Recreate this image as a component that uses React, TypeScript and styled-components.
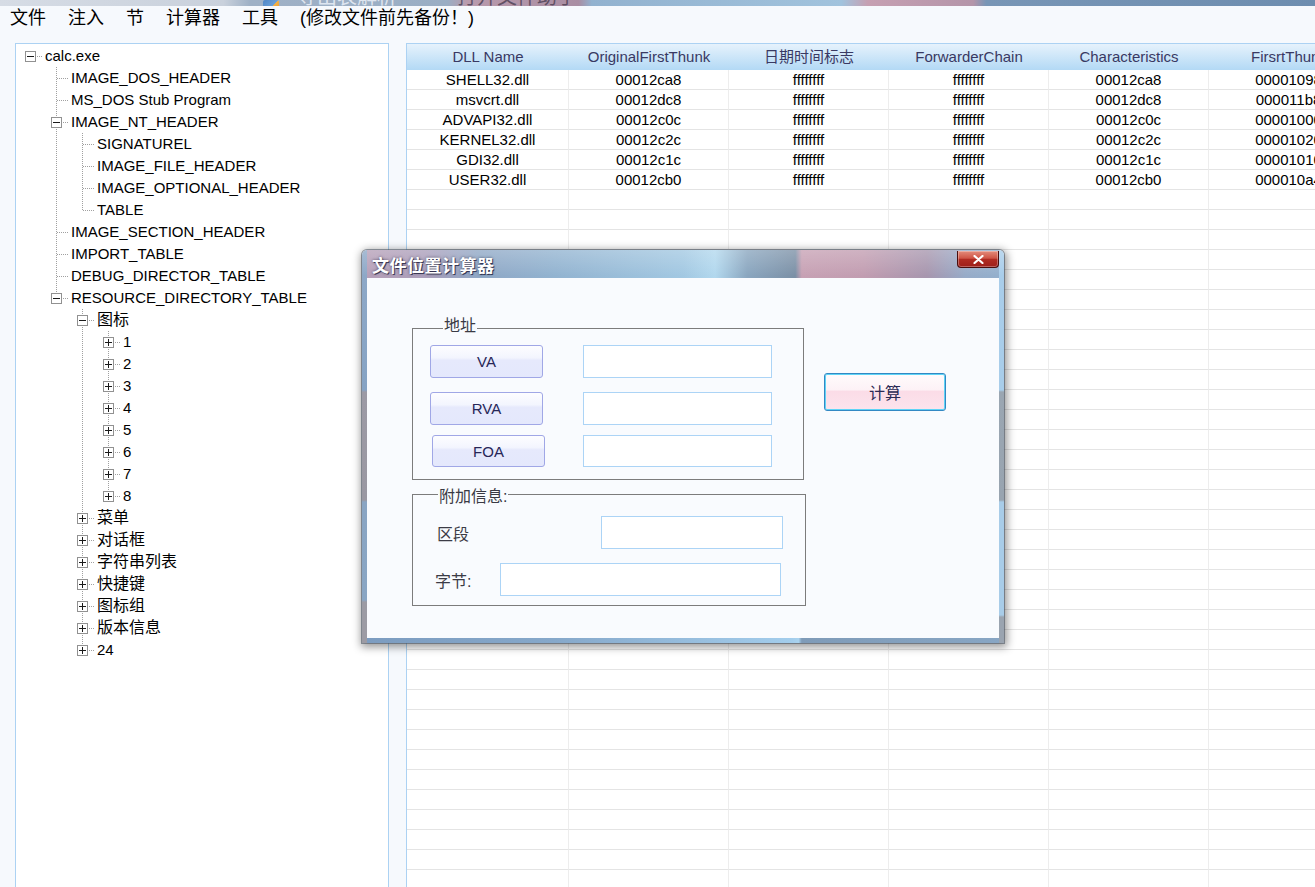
import React from "react";
import styled, { createGlobalStyle } from "styled-components";

const GlobalStyle = createGlobalStyle`
  html, body { margin: 0; padding: 0; }
  body {
    background: #f6f9fd;
    font-family: "Liberation Sans", "Noto Sans CJK SC", sans-serif;
    overflow: hidden;
  }
  * { box-sizing: border-box; }
`;

const Screen = styled.div`
  position: relative;
  width: 1315px;
  height: 887px;
  overflow: hidden;
  display: flex;
  flex-direction: column;
  background: #f6f9fd;
`;

/* ---------- window behind (cut off title bar strip) ---------- */
const BackdropStrip = styled.div`
  flex: 0 0 6px;
  height: 6px;
  overflow: hidden;
  display: flex;
  align-items: flex-end;
  background: linear-gradient(
    90deg,
    #d6dce5 0%,
    #c9d1dc 17%,
    #9fb1c6 19%,
    #9aaec4 34%,
    #b99bad 35.5%,
    #a98ea3 44%,
    #92b2cf 45%,
    #a1c3dd 64%,
    #c6a0b2 66%,
    #b495a9 74%,
    #7896b6 75%,
    #6d8daf 100%
  );
`;

const BackdropIcon = styled.span`
  flex: 0 0 auto;
  width: 16px;
  height: 14px;
  margin-left: 263px;
  margin-bottom: -8px;
  border-radius: 2px;
  background: linear-gradient(135deg, #4f86c6 0%, #6aa0d8 50%, #f0b04a 51%, #e49a2e 100%);
`;

const BackdropTitle = styled.span<{ $gap: number; $tone: string }>`
  flex: 0 0 auto;
  margin-left: ${(p) => p.$gap}px;
  margin-bottom: -1px;
  font-size: 20px;
  line-height: 20px;
  color: ${(p) => p.$tone};
  white-space: nowrap;
`;

/* ---------- menu ---------- */
const MenuBar = styled.nav`
  flex: 0 0 24px;
  height: 24px;
  display: flex;
  align-items: center;
  gap: 22px;
  padding-left: 10px;
  font-size: 18px;
  color: #000;
`;

const MenuItem = styled.span`
  line-height: 24px;
  white-space: nowrap;
`;

/* ---------- workspace ---------- */
const Workspace = styled.main`
  flex: 1 1 auto;
  min-height: 0;
  display: flex;
  gap: 17px;
  padding: 13px 0 0 15px;
  overflow: hidden;
`;

const TreePanel = styled.section`
  flex: 0 0 374px;
  border: 1px solid #acd2f3;
  border-bottom: none;
  background: #fff;
  padding: 1px 0 0 1px;
  overflow: hidden;
`;

const TreeRow = styled.div`
  display: flex;
  height: 22px;
  align-items: stretch;
`;

const TreeGlyph = styled.svg`
  flex: 0 0 26px;
  display: block;
`;

const NodeText = styled.span<{ $cjk: boolean }>`
  margin-left: 2px;
  line-height: 22px;
  font-size: ${(p) => (p.$cjk ? 16 : 15)}px;
  color: #000;
  white-space: nowrap;
`;

const TablePanel = styled.section`
  flex: 0 0 1000px;
  border: 1px solid #acd2f3;
  border-right: none;
  border-bottom: none;
  background: #fff;
  overflow: hidden;
`;

const TableGrid = styled.div`
  display: grid;
  grid-template-columns: 162px repeat(5, 160px);
`;

const HeaderCell = styled.div`
  height: 26px;
  line-height: 26px;
  text-align: center;
  font-size: 15px;
  color: #393963;
  white-space: nowrap;
  overflow: hidden;
  background: linear-gradient(180deg, #e6f2fc 0%, #cfe7f9 45%, #b3d9f5 100%);
`;

const DataCell = styled.div`
  height: 20px;
  line-height: 19px;
  text-align: center;
  font-size: 15px;
  color: #000;
  white-space: nowrap;
  overflow: hidden;
  border-right: 1px solid #ededed;
  border-bottom: 1px solid #e4e4e4;
`;

/* ---------- dialog ---------- */
const DialogWindow = styled.div`
  position: absolute;
  left: 362px;
  top: 250px;
  width: 642px;
  height: 393px;
  padding: 0 5px 5px;
  display: flex;
  flex-direction: column;
  border-radius: 5px 5px 0 0;
  background:
    linear-gradient(180deg, rgba(255, 255, 255, 0.22), rgba(255, 255, 255, 0) 26px),
    linear-gradient(180deg, #8fa9c8 0px, #86a3c4 140px, #9c9aa5 142px, #9a98a2 250px, #8aa5c3 252px, #8aa6c4 350px, #9c9ba4 352px) left top / 5px 100% no-repeat,
    linear-gradient(180deg, #a9cdea 0px, #a8cdea 140px, #9aa6b2 142px, #98a4b0 250px, #a8cce8 252px, #a8cce8 365px, #9aa4b0 367px) right top / 5px 100% no-repeat,
    linear-gradient(90deg, #7c9cc0 0%, #86a8ca 30%, #a3cdec 67%, #a9d2ee 68%, #7f9bb8 68.5%, #88a6c4 100%) left bottom / 100% 5px no-repeat,
    linear-gradient(90deg, #b7a0b8 0%, #ab9fbb 10%, #8fa7c5 18%, #92b3d0 30%, #a2c8e2 50%, #b2d8ee 55%, #8aa6bf 60%, #7b90a6 67.5%, #c7a1b4 68.5%, #c29db1 78%, #a796ae 88%, #97abc8 94%, #93b0cd 100%);
  box-shadow: 0 0 0 1px rgba(70, 80, 95, 0.55), 1px 2px 8px 2px rgba(0, 0, 0, 0.42);
`;

const TitleBar = styled.div`
  flex: 0 0 28px;
  display: flex;
  align-items: center;
  justify-content: space-between;
  padding-left: 5px;
`;

const TitleText = styled.span`
  font-size: 17px;
  font-weight: 700;
  color: #fff;
  letter-spacing: 0.5px;
  text-shadow: 1px 1px 0 rgba(30, 30, 60, 0.75), 0 0 3px rgba(0, 0, 30, 0.55);
  white-space: nowrap;
`;

const CloseButton = styled.div`
  align-self: flex-start;
  margin-top: 1px;
  width: 42px;
  height: 17px;
  display: flex;
  align-items: center;
  justify-content: center;
  border: 1px solid #4a0d0d;
  border-top: none;
  border-radius: 0 0 4px 4px;
  background: linear-gradient(180deg, #e48c7c 0%, #cf5546 45%, #b02b22 52%, #9e1f1a 100%);
  box-shadow: inset 0 0 0 1px rgba(255, 255, 255, 0.3);
`;

const DialogBody = styled.div`
  flex: 1 1 auto;
  display: flex;
  align-items: flex-start;
  padding: 50px 0 0 45px;
  background: #f9fbfe;
`;

const GroupColumn = styled.div`
  flex: 0 0 394px;
  display: flex;
  flex-direction: column;
  gap: 14px;
`;

const GroupBox = styled.div<{ $w: number; $h: number; $pad: string }>`
  position: relative;
  width: ${(p) => p.$w}px;
  height: ${(p) => p.$h}px;
  padding: ${(p) => p.$pad};
  border: 1px solid #7c7c7c;
`;

const GroupLegend = styled.span<{ $x: number; $y: number }>`
  position: absolute;
  left: ${(p) => p.$x}px;
  top: ${(p) => p.$y}px;
  padding: 0 1px;
  background: #f9fbfe;
  font-size: 16px;
  line-height: 18px;
  color: #3a3a44;
  white-space: nowrap;
`;

const AddressRow = styled.div<{ $top: number; $h: number }>`
  display: grid;
  grid-template-columns: 153px 189px;
  height: ${(p) => p.$h}px;
  margin-top: ${(p) => p.$top}px;
`;

const AddrButton = styled.button<{ $shift: number }>`
  width: 113px;
  height: 100%;
  margin: 0 0 0 ${(p) => p.$shift}px;
  padding: 0;
  border: 1px solid #a0a7e6;
  border-radius: 3px;
  background: linear-gradient(180deg, #fdfdff 0%, #f3f5fe 38%, #e6e9fc 46%, #e4e8fc 100%);
  font-family: "Liberation Sans", sans-serif;
  font-size: 15px;
  color: #262657;
`;

const TextBox = styled.input`
  width: 100%;
  height: 100%;
  margin: 0;
  padding: 0 4px;
  border: 1px solid #acd4f6;
  background: #fff;
  outline: none;
  font-size: 15px;
`;

const InfoRow = styled.div<{ $top: number }>`
  display: flex;
  align-items: center;
  height: 33px;
  margin-top: ${(p) => p.$top}px;
`;

const InfoLabel = styled.span<{ $w: number; $shift: number }>`
  flex: 0 0 ${(p) => p.$w}px;
  margin-left: ${(p) => p.$shift}px;
  font-size: 16px;
  color: #3c3c46;
  white-space: nowrap;
`;

const InfoInput = styled(TextBox)<{ $w: number }>`
  flex: 0 0 ${(p) => p.$w}px;
  width: ${(p) => p.$w}px;
`;

const CalcButton = styled.button`
  flex: 0 0 122px;
  width: 122px;
  height: 38px;
  margin: 45px 0 0 18px;
  padding: 0;
  border: 1px solid #3389c4;
  border-radius: 3px;
  box-shadow: inset 0 0 0 1px #5fd4f6;
  background: linear-gradient(180deg, #fffbfc 0%, #fdf2f6 44%, #fbdce7 48%, #fce4ed 100%);
  font-family: "Liberation Sans", "Noto Sans CJK SC", sans-serif;
  font-size: 16px;
  color: #2b2b55;
`;

/* ---------- data ---------- */
type TreeNode = { label: string; toggle?: "plus" | "minus"; children?: TreeNode[] };
type FlatRow = {
  label: string;
  toggle?: "plus" | "minus";
  guides: boolean[];
  up: boolean;
  down: boolean;
};

const folder = (label: string): TreeNode => ({ label, toggle: "plus" });

const tree: TreeNode[] = [
  {
    label: "calc.exe",
    toggle: "minus",
    children: [
      { label: "IMAGE_DOS_HEADER" },
      { label: "MS_DOS Stub Program" },
      {
        label: "IMAGE_NT_HEADER",
        toggle: "minus",
        children: [
          { label: "SIGNATUREL" },
          { label: "IMAGE_FILE_HEADER" },
          { label: "IMAGE_OPTIONAL_HEADER" },
          { label: "TABLE" },
        ],
      },
      { label: "IMAGE_SECTION_HEADER" },
      { label: "IMPORT_TABLE" },
      { label: "DEBUG_DIRECTOR_TABLE" },
      {
        label: "RESOURCE_DIRECTORY_TABLE",
        toggle: "minus",
        children: [
          {
            label: "图标",
            toggle: "minus",
            children: ["1", "2", "3", "4", "5", "6", "7", "8"].map(folder),
          },
          folder("菜单"),
          folder("对话框"),
          folder("字符串列表"),
          folder("快捷键"),
          folder("图标组"),
          folder("版本信息"),
          folder("24"),
        ],
      },
    ],
  },
];

function flatten(nodes: TreeNode[], depth: number, guides: boolean[], out: FlatRow[]) {
  nodes.forEach((n, i) => {
    const hasNext = i < nodes.length - 1;
    out.push({ label: n.label, toggle: n.toggle, guides, up: depth > 0 || i > 0, down: hasNext });
    if (n.children && n.toggle === "minus") flatten(n.children, depth + 1, [...guides, hasNext], out);
  });
  return out;
}

const rows = flatten(tree, 0, [], []);

const DOT = "#a0a0a0";

function Guide({ line }: { line: boolean }) {
  return (
    <TreeGlyph width={26} height={22} viewBox="0 0 26 22" shapeRendering="crispEdges">
      {line && <line x1={13.5} y1={0} x2={13.5} y2={22} stroke={DOT} strokeDasharray="1 1" />}
    </TreeGlyph>
  );
}

function Connector({ up, down, toggle }: { up: boolean; down: boolean; toggle?: "plus" | "minus" }) {
  let v: React.ReactNode = null;
  if (up && down) v = <line x1={13.5} y1={0} x2={13.5} y2={22} stroke={DOT} strokeDasharray="1 1" />;
  else if (up) v = <line x1={13.5} y1={0} x2={13.5} y2={12} stroke={DOT} strokeDasharray="1 1" />;
  else if (down) v = <line x1={13.5} y1={12} x2={13.5} y2={22} stroke={DOT} strokeDasharray="1 1" />;
  return (
    <TreeGlyph width={26} height={22} viewBox="0 0 26 22" shapeRendering="crispEdges">
      {v}
      <line x1={14} y1={11.5} x2={26} y2={11.5} stroke={DOT} strokeDasharray="1 1" />
      {toggle && (
        <g>
          <rect x={8.5} y={6.5} width={10} height={10} fill="#fff" stroke="#919191" />
          <line x1={10} y1={11.5} x2={17} y2={11.5} stroke="#1a1a1a" />
          {toggle === "plus" && <line x1={13.5} y1={8} x2={13.5} y2={15} stroke="#1a1a1a" />}
        </g>
      )}
    </TreeGlyph>
  );
}

const columns = ["DLL Name", "OriginalFirstThunk", "日期时间标志", "ForwarderChain", "Characteristics", "FirsrtThunk"];

const imports = [
  ["SHELL32.dll", "00012ca8", "ffffffff", "ffffffff", "00012ca8", "00001098"],
  ["msvcrt.dll", "00012dc8", "ffffffff", "ffffffff", "00012dc8", "000011b8"],
  ["ADVAPI32.dll", "00012c0c", "ffffffff", "ffffffff", "00012c0c", "00001000"],
  ["KERNEL32.dll", "00012c2c", "ffffffff", "ffffffff", "00012c2c", "00001020"],
  ["GDI32.dll", "00012c1c", "ffffffff", "ffffffff", "00012c1c", "00001010"],
  ["USER32.dll", "00012cb0", "ffffffff", "ffffffff", "00012cb0", "000010a4"],
];

const emptyRows = Array.from({ length: 36 }, () => ["", "", "", "", "", ""]);
const tableRows = [...imports, ...emptyRows];

const menus = ["文件", "注入", "节", "计算器", "工具", "(修改文件前先备份！)"];

export default function App() {
  return (
    <>
      <GlobalStyle />
      <Screen>
        <BackdropStrip>
          <BackdropIcon />
          <BackdropTitle $gap={18} $tone="rgba(235, 240, 248, 0.85)">导出表解析</BackdropTitle>
          <BackdropTitle $gap={60} $tone="rgba(60, 50, 70, 0.7)">打开文件助手</BackdropTitle>
        </BackdropStrip>

        <MenuBar>
          {menus.map((m) => (
            <MenuItem key={m}>{m}</MenuItem>
          ))}
        </MenuBar>

        <Workspace>
          <TreePanel>
            {rows.map((r, i) => (
              <TreeRow key={i}>
                {r.guides.map((g, k) => (
                  <Guide key={k} line={g} />
                ))}
                <Connector up={r.up} down={r.down} toggle={r.toggle} />
                <NodeText $cjk={/[\u4e00-\u9fff]/.test(r.label)}>{r.label}</NodeText>
              </TreeRow>
            ))}
          </TreePanel>

          <TablePanel>
            <TableGrid>
              {columns.map((c) => (
                <HeaderCell key={c}>{c}</HeaderCell>
              ))}
              {tableRows.map((row, ri) =>
                row.map((v, ci) => <DataCell key={`${ri}-${ci}`}>{v}</DataCell>)
              )}
            </TableGrid>
          </TablePanel>
        </Workspace>

        <DialogWindow>
          <TitleBar>
            <TitleText>文件位置计算器</TitleText>
            <CloseButton>
              <svg width="11" height="9" viewBox="0 0 11 9">
                <path d="M1.5 1 L9.5 8 M9.5 1 L1.5 8" stroke="#fff" strokeWidth="2.2" strokeLinecap="round" />
              </svg>
            </CloseButton>
          </TitleBar>
          <DialogBody>
            <GroupColumn>
              <GroupBox $w={392} $h={152} $pad="16px 0 0 17px">
                <GroupLegend $x={30} $y={-12}>地址</GroupLegend>
                <AddressRow $top={0} $h={33}>
                  <AddrButton $shift={0}>VA</AddrButton>
                  <TextBox />
                </AddressRow>
                <AddressRow $top={14} $h={33}>
                  <AddrButton $shift={0}>RVA</AddrButton>
                  <TextBox />
                </AddressRow>
                <AddressRow $top={10} $h={32}>
                  <AddrButton $shift={2}>FOA</AddrButton>
                  <TextBox />
                </AddressRow>
              </GroupBox>
              <GroupBox $w={394} $h={112} $pad="21px 0 0 24px">
                <GroupLegend $x={25} $y={-7}>附加信息:</GroupLegend>
                <InfoRow $top={0}>
                  <InfoLabel $w={164} $shift={0}>区段</InfoLabel>
                  <InfoInput $w={182} />
                </InfoRow>
                <InfoRow $top={14}>
                  <InfoLabel $w={65} $shift={-2}>字节:</InfoLabel>
                  <InfoInput $w={281} />
                </InfoRow>
              </GroupBox>
            </GroupColumn>
            <CalcButton>计算</CalcButton>
          </DialogBody>
        </DialogWindow>
      </Screen>
    </>
  );
}
